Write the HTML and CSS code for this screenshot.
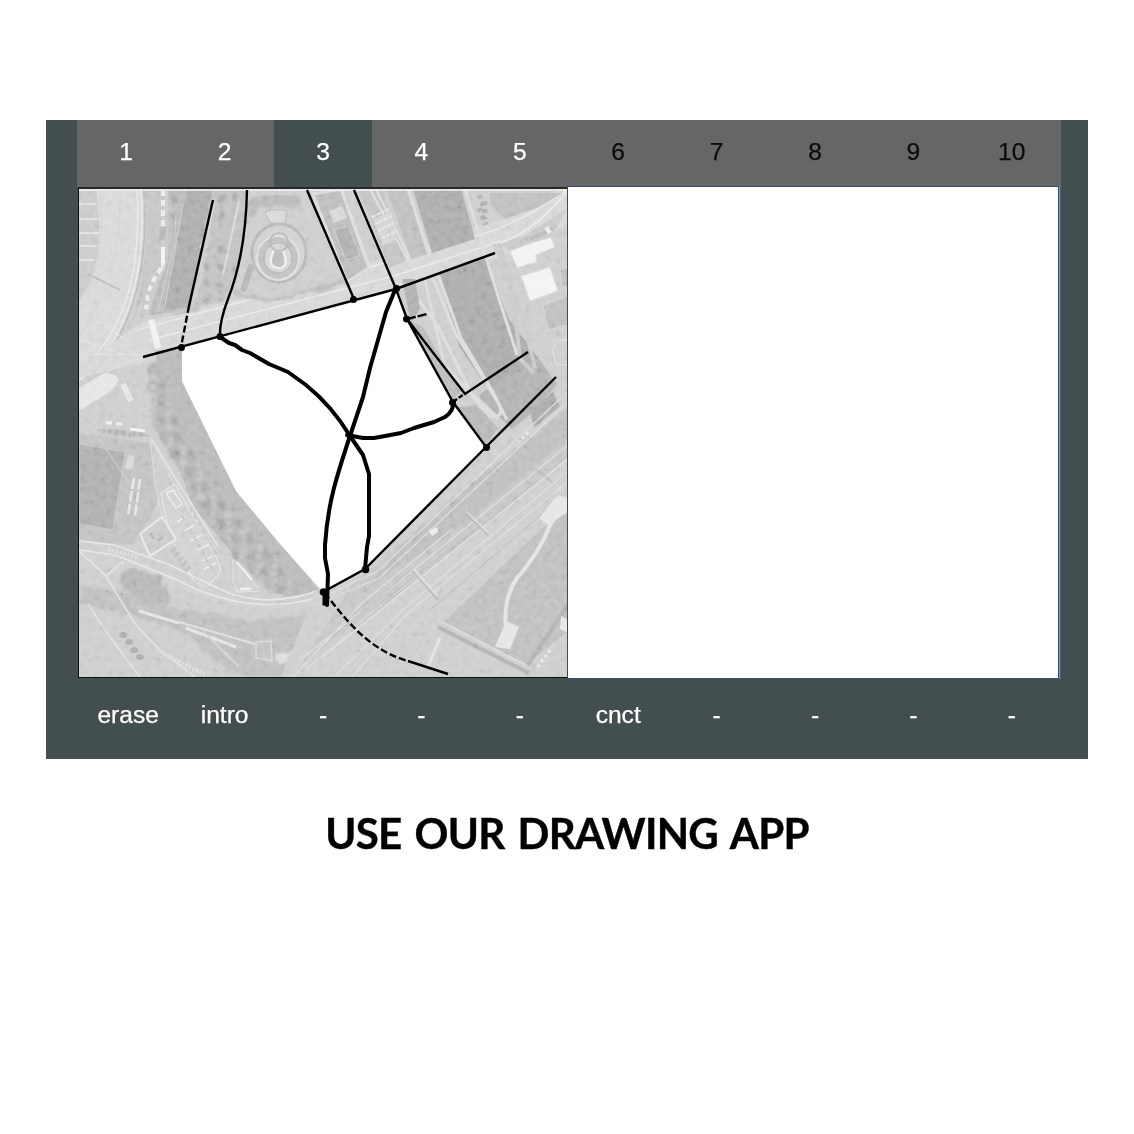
FILE: index.html
```html
<!DOCTYPE html>
<html lang="en">
<head>
<meta charset="utf-8">
<title>Drawing app</title>
<link rel="stylesheet" href="styles.css">
</head>
<body>
<main class="page">
<section class="app">
<nav class="tabs">
<button class="tab">1</button><button class="tab">2</button><button class="tab active">3</button><button class="tab">4</button><button class="tab">5</button><button class="tab idle">6</button><button class="tab idle">7</button><button class="tab idle">8</button><button class="tab idle">9</button><button class="tab idle">10</button>
</nav>
<div class="boards">
<div class="map">
<svg viewBox="79 189 489 488" preserveAspectRatio="none">
<defs>
<filter id="grain" x="0" y="0" width="100%" height="100%"><feTurbulence type="fractalNoise" baseFrequency=".16" numOctaves="4" seed="8"/><feColorMatrix values="1.5 0 0 0 -.25  1.5 0 0 0 -.25  1.5 0 0 0 -.25  0 0 0 0 1"/></filter>
<filter id="rough" x="0" y="0" width="100%" height="100%"><feTurbulence type="fractalNoise" baseFrequency=".09" numOctaves="2" seed="3"/><feDisplacementMap in="SourceGraphic" scale="9" xChannelSelector="R" yChannelSelector="G"/><feGaussianBlur stdDeviation="1"/></filter>
<pattern id="trees" width="15" height="17" patternUnits="userSpaceOnUse"><circle cx="4" cy="4" r="3.3" fill="#c4c4c4"/><circle cx="11" cy="12" r="3.5" fill="#a8a8a8"/><circle cx="4" cy="13" r="2.4" fill="#c5c5c5"/></pattern>
<pattern id="plots" width="13" height="11" patternUnits="userSpaceOnUse" patternTransform="rotate(40)"><path d="M0 0H13M0 0V11M4 5h4" stroke="#cecece" fill="none"/></pattern>
</defs>
<rect x="79" y="189" width="489" height="488" fill="#cdcdcd"/>

<!-- stadium and its concourse -->
<g>
<path d="M79 189h63c5 61-3 111-27 151-10 19-23 33-36 42z" fill="#d9d9d9"/>
<path d="M79 189h17c6 36 3 67-5 93l-12 20z" fill="#cacaca"/>
<path d="M79 204h17M79 219h20M79 233h20M79 246h18M79 260h15" stroke="#e9e9e9" stroke-width="1.5"/>
<path d="M88 274l32 16" stroke="#bebebe" stroke-width="2"/>
<path d="M141 189c4 57-3 109-27 151q-14 26-35 40M137 189c4 65-6 127-43 168" fill="none" stroke="#e8e8e8" stroke-width="1.5"/>
<path d="M144 189c4 57-4 111-28 153" fill="none" stroke="#b9b9b9" stroke-width="1.5"/>
<path d="M145 191h16l-1 70-14 28-16 40q20-60 15-138z" fill="#c2c2c2"/>
<path d="M100 189c4 38 0 68-9 96l-12 24M120 189c2 58-9 102-41 146" fill="none" stroke="#d2d2d2"/>
<path d="M160 190l4 1-2 50v30l-12 14-3 28-7 8q8-55 4-132z" fill="#c6c6c6"/>
<path d="M163 190v49M161 268l-8 13-5 12-2 16" fill="none" stroke="#ededed" stroke-width="4" stroke-dasharray="6 4"/>
<path d="M163 227v13" stroke="#b5b5b5" stroke-width="7"/>
<path d="M163 247v22" stroke="#f4f4f4" stroke-width="4"/>
</g>

<!-- western river and its banks -->
<g>
<path d="M168 189h46l-24 122-42 4 20-56z" fill="#bababa"/>
<path d="M168 192l10 0-3 45-12 40-15 35 0-22 15-20z" fill="url(#trees)" filter="url(#rough)"/>
<path d="M187 189h25l-23 118-24 2z" fill="#adadad"/>
<path d="M176 214l-1 26-17 72M183 204l-18 102" fill="none" stroke="#cecece"/>
<path d="M215 189h32q0 73-25 113l-29 5q15-35 22-118z" fill="#c1c1c1"/>
<path d="M212 192h30l-10 20-16 10zM204 252l20-8 12 17-12 40-27 2z" fill="url(#trees)" filter="url(#rough)"/>
<path d="M214 202q-5 30-14 46M239 201l-16 74" fill="none" stroke="#dadada" stroke-width="2"/>
<path d="M157 350h25v32l54 109 85 101-36 5-49-40-43-50-30-85z" fill="#b9b9b9"/>
<path d="M147 364l10-2 24 72 40 67 62 70 10 19-20 4-38-34-42-69-38-64z" fill="#b6b6b6" filter="url(#rough)"/>
<path d="M147 364l10-2 24 72 40 67 62 70 10 19-20 4-38-34-42-69-38-64z" fill="url(#trees)" filter="url(#rough)"/>
</g>

<!-- road crossing the north side -->
<g>
<path d="M79 365l62-42 85-21 175-48 92-32 39-12 35-28v43l-52 27-119 39-208 61-109 26z" fill="#d7d7d7"/>
<path d="M155 350h27v20h-24z" fill="#b9b9b9"/>
<path d="M137 330l89-24 177-48 96-29 34-17 34-22M149 340l80-21 168-44 104-34" fill="none" stroke="#e9e9e9" stroke-width="1.5"/>
<path d="M80 389l39-24 25-8M80 354l65 1M79 340l45 14M98 321l45 31" fill="none" stroke="#e3e3e3"/>
<path d="M148 320l6-1 7 28-6 2z" fill="#f1f1f1"/>
<path d="M79 388l24-14q10-2 16 5-4 10-14 16l-26 16z" fill="#e5e5e5"/>
<path d="M123 384l8 17" stroke="#e5e5e5" stroke-width="6"/>
<path d="M172 311l27-5v5l-27 5z" fill="#c2c2c2"/>
</g>

<!-- circular garden -->
<g>
<path d="M249 189h70l35 88-88 27-32-15z" fill="#cdcdcd"/>
<g filter="url(#rough)"><path d="M248 218q14-25 48-22M247 202h54" fill="none" stroke="#b9b9b9" stroke-width="9"/></g>
<ellipse cx="279" cy="253" rx="27" ry="29" fill="#d2d2d2" stroke="#b8b8b8" stroke-width="3"/>
<ellipse cx="278" cy="258" rx="21" ry="22" fill="#c1c1c1" stroke="#dfdfdf" stroke-width="2"/>
<ellipse cx="278" cy="258" rx="14" ry="15" fill="#d6d6d6" stroke="#b4b4b4"/>
<path d="M274 250q-8 17 4 18t5-18" fill="#bdbdbd" stroke="#ededed" stroke-width="2.500"/>
<circle cx="279" cy="242" r="9" fill="none" stroke="#b7b7b7" stroke-width="2"/>
<path d="M265 212q11-4 22-1l-2 12h-15z" fill="#d9d9d9" stroke="#b8b8b8"/>
<path d="M249 263l6 3-9 26-6-2z" fill="#b6b6b6"/>
<path d="M233 291l36 10 67-16 28-13" fill="none" stroke="#bbb" stroke-width="4" filter="url(#rough)"/>
</g>

<!-- plaza between the north roads -->
<g>
<path d="M313 194l28-5 28 79-22 14z" fill="#bdbdbd" stroke="#dcdcdc" stroke-width="3"/>
<path d="M334 230l14-4 12 29-14 5z" fill="#b0b0b0" stroke="#cfcfcf"/>
<path d="M329 211l13-5 5 12-13 5z" fill="#d8d8d8"/>
<path d="M342 190l31 84" stroke="#e0e0e0"/>
<path d="M359 190l22-2 27 72-19 8z" fill="#c4c4c4"/>
<path d="M370 189l38 72M376 189l35 72" stroke="#e0e0e0" stroke-width="2"/>
<path d="M373 219l18-7 7 27-15 7z" fill="#d4d4d4"/>
<path d="M372 217l17-8M375 224l17-8M378 231l16-8M382 238l15-7" stroke="#e8e8e8" stroke-width="2" stroke-dasharray="4 1"/>
<path d="M387 190h20l20 64-16 5z" fill="#bfbfbf"/>
</g>

<!-- canal -->
<g>
<path d="M413 189h48l14 50-43 14z" fill="#acacac"/>
<path d="M439 275l47-17 22 60 31 41-48 35-32-48z" fill="#ababab"/>
<path d="M480 394l59-35 18 25-20 25-25 20-33-32z" fill="#b2b2b2"/>
<path d="M408 189l21 65M465 189l27 88 25 78M402 279l35 45 34 69 27 26M438 274l23 64 32 54 14 28" fill="none" stroke="#dcdcdc" stroke-width="3"/>
<path d="M494 244l18 42 8 73 14 14M499 243l23 71 13 54" fill="none" stroke="#cacaca" stroke-width="4"/>
<path d="M425 281l19 83 46 52q17 3 7-15l-41-67-24-57" fill="none" stroke="#dcdcdc" stroke-width="3"/>
<path d="M402 279h13l5 30-9 13z" fill="#b0b0b0"/>
<path d="M407 319l16 8 37 64-6 9z" fill="#bbb"/>
<path d="M456 408l20-3 22 23-12 17z" fill="#b7b7b7"/>
<path d="M489 193h74l-24 14-35 12-12-13z" fill="#bfbfbf"/>
<path d="M479 195l6 15M479 208l7 17M485 201v18" stroke="#b0b0b0" stroke-width="5" stroke-dasharray="4 4"/>
<path d="M499 243l25-7 43-27-19 34-33 12z" fill="#c9c9c9"/>
<path d="M500 243q28-10 49-32 10-10 18-19" fill="none" stroke="#e8e8e8" stroke-width="2"/>
</g>

<!-- white roofed buildings -->
<g>
<path d="M510 251l18-7 23-7 4 10-19 8 1 7-20 6z" fill="#f2f2f2" stroke="#d9d9d9"/>
<path d="M521 276l29-9 8 24-28 10z" fill="#f3f3f3" stroke="#d9d9d9"/>
<path d="M530 239l23-10" stroke="#b8b8b8" stroke-width="4"/>
<path d="M544 228l4-2 4 6-4 2z" fill="#ededed"/>
<path d="M560 270l8-3v21l-6-2zM543 305l25-9v29l-20 5z" fill="#bfbfbf" stroke="#d5d5d5"/>
<path d="M552 350q5-13 16-10v24l-11 2z" fill="#cfcfcf" stroke="#e1e1e1"/>
</g>

<!-- sports ground and works yard -->
<g>
<path d="M79 433l70 10q20 34 2 75l-20 27-52-5z" fill="#c2c2c2"/>
<path d="M79 444l46 8-12 78-34-6z" fill="#afafaf" stroke="#c8c8c8"/>
<path d="M84 418l44 63" stroke="#d0d0d0"/>
<path d="M128 455l7 1-3 14-7-1z" fill="#d8d8d8"/>
<path d="M134 478l-6 37M140 479l-5 37" stroke="#e6e6e6" stroke-width="2.500" stroke-dasharray="11 2"/>
<path d="M97 429l53 8" stroke="#aaa" stroke-width="5" stroke-dasharray="4 2" filter="url(#rough)"/>
<path d="M106 423h6M116 424h6M130 429l15 2" stroke="#f0f0f0" stroke-width="3"/>
<path d="M150 437l22 44 51 80-13 25-43-49-12-52z" fill="#ccc" stroke="#dcdcdc"/>
<path d="M151 438l26 43 41 65" fill="none" stroke="#e0e0e0" stroke-width="2"/>
<path d="M161 493l14-9 42 74 4 14-14 15-12-4-26-48z" fill="#d2d2d2" stroke="#e1e1e1" stroke-width="1.5"/>
<path d="M140 534l22-17 14 22-26 17z" fill="#cbcbcb" stroke="#e9e9e9" stroke-width="2"/>
<path d="M166 493l10 15 6-4-9-14zM177 522l8-5M184 531l10-6M190 541l12-6M197 550l13-6M202 561l11-5M204 569l12-6" fill="none" stroke="#ebebeb" stroke-width="1.500"/>
<path d="M182 516l30 53M190 508l27 48" stroke="#c3c3c3" stroke-width="2" stroke-dasharray="5 3"/>
<path d="M150 533l4 6M158 541l5-4" stroke="#b5b5b5" stroke-width="3"/>
<path d="M172 548l18 24" stroke="#c1c1c1" stroke-width="7" stroke-dasharray="4 2"/>
<path d="M233 559l28 32-24 1-4-10z" fill="#d0d0d0" stroke="#e3e3e3"/>
<path d="M237 562l15 18M240 589h11" stroke="#eee" stroke-width="2.500"/>
</g>

<!-- southern roads and woodland -->
<g>
<path d="M79 549l37 2 98 39q60 28 112 1l41-22v9q-64 46-151 23l-84-28-53-15z" fill="#d0d0d0"/>
<path d="M79 541l35 4 56 20 56 27q46 17 96-3M79 550l36 5 60 24q55 29 105 25 30-1 66-18" fill="none" stroke="#e6e6e6" stroke-width="1.7"/>
<g filter="url(#rough)">
<path d="M119 577q14-15 31-4 15-4 19 33l-27-5-18-10z" fill="#b7b7b7"/>
<path d="M81 588l51 12 75 25M79 597l84 22 95 35" fill="none" stroke="#bebebe" stroke-width="9"/>
<path d="M166 606l88 15 60-8 10 25-30 39h-57l-42-33z" fill="#bfbfbf"/>
</g>
<path d="M79 551l27 25 29 48 25 26 35 27M88 604l19 29 33 44M106 576l18-15" fill="none" stroke="#e0e0e0" stroke-width="1.8"/>
<path d="M139 611l40 12M186 628l50 19" stroke="#e3e3e3" stroke-width="3"/>
<path d="M179 622l76 22" stroke="#dedede" stroke-width="2"/>
<path d="M256 642l15-1 1 20-16-3z" fill="#c4c4c4" stroke="#d9d9d9" stroke-width="1.500"/>
<path d="M275 654l22-4-9 11 8 3-17-2z" fill="#dedede" filter="url(#rough)"/>
<g fill="#adadad"><ellipse cx="123" cy="635" rx="4" ry="3"/><ellipse cx="129" cy="642" rx="4" ry="3"/><ellipse cx="134" cy="650" rx="4" ry="3"/><ellipse cx="140" cy="657" rx="4" ry="3"/></g>
<path d="M108 549l31 8M157 650l48 25" stroke="#ddd" stroke-width="4" stroke-dasharray="2 2"/>
<path d="M204 632l35 35M296 677l24-25" stroke="#d4d4d4" stroke-width="2"/>
</g>

<!-- railway corridor and allotments -->
<g>
<path d="M316 590l51-23 201-188v126L362 677h-81z" fill="#cecece"/>
<path d="M351 586l217-180v55L301 665z" fill="#c7c7c7"/>
<path d="M412 536l41-38 115-88v29l-105 86-95 61z" fill="#bebebe" filter="url(#rough)"/>
<path d="M530 412l23-20 7 14-26 22z" fill="#acacac"/>
<path d="M327 595l51-24 189-179M318 603l60-24 189-176M323 657l244-198M306 669l82-66 179-143M300 660l101-80 166-134M352 677l56-64 159-131M334 677l72-70 161-135M293 677l68-73 91-75" fill="none" stroke="#dcdcdc" stroke-width="1.3"/>
<path d="M351 632l217-176M381 603l100-78M430 610l138-118M330 639l80-68" stroke="#b9b9b9" fill="none"/>
<path d="M412 571l26 29M466 514l22 21M537 470l16 13" stroke="#b8b8b8" stroke-width="1.500"/>
<path d="M414 569l23 26M467 512l22 21" stroke="#e0e0e0" stroke-width="1.500"/>
<path d="M429 531l8-4 1 5-6 4z" fill="#eee"/>
<path d="M568 505l-37 34-88 84 82 42 43-34z" fill="#bebebe"/>
<path d="M558 515l-27 28-84 80 76 40 39-34z" fill="url(#plots)" filter="url(#rough)"/>
<path d="M438 627l91 46M528 665l40-61" stroke="#b2b2b2" stroke-width="4"/>
<path d="M438 620l88 45" stroke="#d9d9d9" stroke-width="2"/>
<path d="M550 525q-10 27-33 53-14 21-11 50" fill="none" stroke="#e3e3e3" stroke-width="4"/>
<path d="M539 518l19-23 10 3v14l-11 7-7 8zM506 621l13 6-9 22-15-2z" fill="#e5e5e5"/>
<path d="M561 616l7 4v13l-8-4z" fill="#e8e8e8"/>
<path d="M440 638l-12 28" stroke="#e2e2e2" stroke-width="3"/>
<path d="M550 650l-14 19M528 432l-9 10" stroke="#e9e9e9" stroke-width="3" stroke-dasharray="3 3"/>
</g>

<rect class="grain" x="79" y="189" width="489" height="488" filter="url(#grain)"/>
<path d="M79 190H568" stroke="#efefef" stroke-width="2" opacity=".8"/>
<path d="M182 348L220 337 354 299 396 289 407 319 453 402 486 447 365 569 323 592 280 544 236 491 182 381z" fill="#fff"/>

<!-- site boundary and connecting roads -->
<g class="road">
<path d="M143 357L396 289 495 253M213 200L189 306M247 190C246 242 237 276 228 299Q219 323 220 337M307 190L354 299M354 190L396 289 407 319 453 402 486 447 556 377M407 319L465 394 528 352M486 447L365 569 323 592M408 661L448 674"/>
<path d="M189 306L181 347" stroke-dasharray="7 3"/>
<path d="M407 319L427 314" stroke-dasharray="9 2"/>
<path d="M453 402L464 394" stroke-dasharray="5 2"/>
<path d="M325 593C341 614 358 635 379 648Q391 656 408 661" stroke-dasharray="7 3"/>
</g>
<g><circle cx="181.500" cy="347.500" r="3.500"/><circle cx="220" cy="336.500" r="3.500"/><circle cx="353.500" cy="299.500" r="3.500"/><circle cx="396.500" cy="288.500" r="3.500"/><circle cx="406.500" cy="319" r="3.500"/><circle cx="452.500" cy="402.500" r="3.500"/><circle cx="486.500" cy="447.500" r="3.500"/><circle cx="365.500" cy="569.500" r="3.800"/><circle cx="323.500" cy="592" r="3.800"/><circle cx="350" cy="436" r="3.500"/></g>

<!-- freehand connections -->
<g class="stroke">
<path d="M220 337L229 343 235 345 242 350 250 353 269 364 288 372 306 385Q332 406 350 436L363 455 369 474V536L367 547 365 569"/>
<path d="M395 290L386 312 378 340 370 368 363 397 350 436Q339 469 334 488 327 515 325 545V558L328 574 327 605"/>
<path d="M347 435L363 438H374L385 436 401 433 414 428 434 422 445 417Q454 411 453 402"/>
<path d="M325.500 594V605.500" stroke-width="6" stroke-linecap="butt"/>
</g>
</svg>
</div>
<div class="canvas"></div>
</div>
<div class="actions"><span class="erase">erase</span><span>intro</span><span>-</span><span>-</span><span>-</span><span>cnct</span><span>-</span><span>-</span><span>-</span><span>-</span></div>
</section>
<h1 class="headline">USE OUR DRAWING APP</h1>
</main>
</body>
</html>
```
FILE: styles.css
```css
* { box-sizing: border-box; }
body { margin: 0; background: #fff; }
.page { min-height: 1134px; padding-top: 120px; }
.app { width: 1042px; height: 639px; margin-left: 46px; padding: 0 27px 0 31px; background: #434f4e; font: 24.6px "Liberation Sans", Arial, sans-serif; }
.tabs { display: grid; grid-template-columns: repeat(10, 1fr); width: 984px; height: 66px; }
.tab { border: 0; padding: 0 0 2px; background: #666; color: #fff; font: inherit; -webkit-text-stroke: .25px currentColor; }
.tab.active { background: #434f4e; }
.tab.idle { color: #0c0c0c; }
.boards { display: flex; width: 984px; height: 493px; background: linear-gradient(90deg, #666 20%, #434f4e 20% 30%, #666 30%) 0 0 / 100% 1px no-repeat; }
.map { width: 490px; height: 491px; margin: 1px 0 0 1px; border: 1px solid #111; border-top: 2px solid #26282b; border-right: 0; }
.map svg { display: block; width: 100%; height: 100%; }
.grain { opacity: .3; mix-blend-mode: soft-light; }
.road { fill: none; stroke: #000; stroke-width: 2.4; }
.stroke { fill: none; stroke: #000; stroke-width: 4; stroke-linecap: round; stroke-linejoin: round; }
.canvas { width: 492px; height: 493px; margin-left: -1px; background: #fff; border: 1px solid #314b77; box-shadow: 1px 0 #8495a9, 2px 0 #506171; }
.actions { display: grid; grid-template-columns: repeat(10, 1fr); width: 984px; height: 72px; align-items: center; text-align: center; color: #fff; -webkit-text-stroke: .25px currentColor; }
.erase { padding-left: 4px; }
.headline { margin: 46px 0 0; text-align: center; font: 700 42px/56px Lato, sans-serif; letter-spacing: -.7px; word-spacing: 3.5px; color: #000; white-space: nowrap; -webkit-text-stroke: .4px #000; }
```
